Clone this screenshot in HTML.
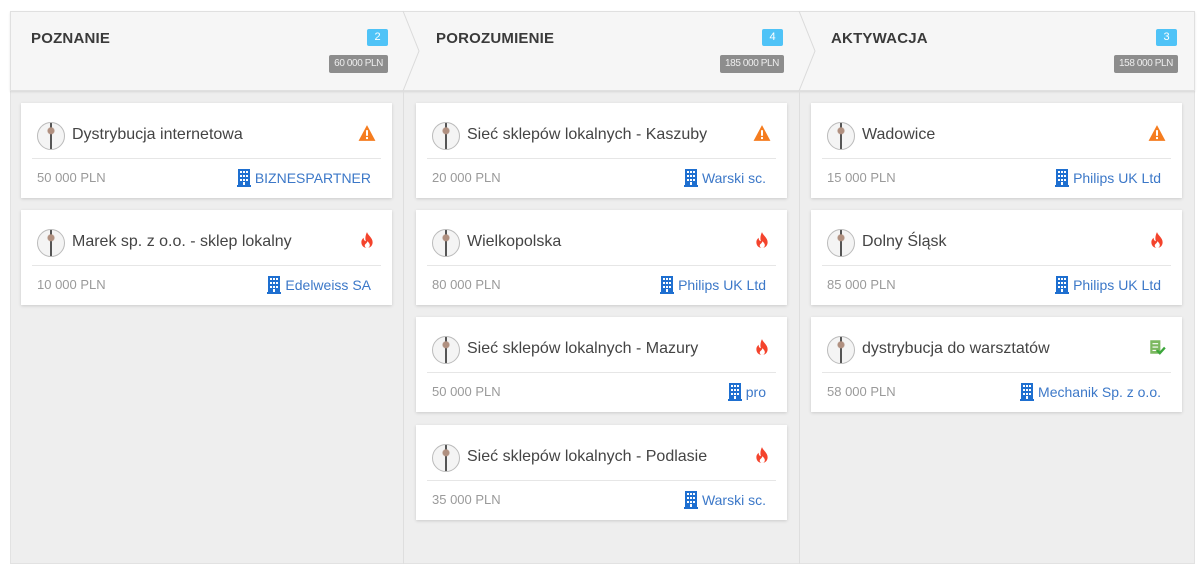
<!DOCTYPE html>
<html><head><meta charset="utf-8"><style>
*{box-sizing:border-box;margin:0;padding:0}
body{width:1200px;height:569px;background:#fff;font-family:"Liberation Sans",sans-serif;position:relative;overflow:hidden}
.wrap{position:absolute;left:10px;top:11px;width:1185px;height:553px;background:#eeeeee;border:1px solid #e2e2e2}
.head{position:absolute;left:10px;top:11px;width:1185px;height:80px;background:#f6f6f6;border:1px solid #e0e0e0;box-shadow:0 1px 2px rgba(0,0,0,.1)}
.vl{position:absolute;top:91px;width:1px;height:473px;background:#dedede}
.ht{position:absolute;top:30px;font-size:15px;font-weight:bold;color:#3a3a3a;letter-spacing:.2px}
.cnt{position:absolute;top:29px;height:17px;width:21px;background:#4fc3f7;color:#fff;font-size:11px;text-align:center;line-height:17px;border-radius:2px}
.sum{position:absolute;top:55px;height:18px;background:#8d8d8d;color:#eee;font-size:10px;line-height:18px;padding:0 5px;border-radius:2px;letter-spacing:-.4px}
.card{position:absolute;width:371px;height:95px;background:#fff;box-shadow:0 1px 3px rgba(0,0,0,.15)}
.av{position:absolute;left:16px;top:19px;width:28px;height:28px;border-radius:50%;border:1px solid #bbb;background:radial-gradient(circle at 50% 30%,#b09080 0 3px,transparent 4px),linear-gradient(90deg,#f4f4f4 0 46%,#555 46% 54%,#f4f4f4 54%)}
.tt{position:absolute;left:51px;top:23px;font-size:16px;color:#444}
.ic{position:absolute;right:16px;top:21px;width:18px;height:18px}
.sep{position:absolute;left:11px;right:11px;top:55px;height:1px;background:#e6e6e6}
.am{position:absolute;left:16px;top:67px;font-size:13px;color:#9a9a9a}
.co{position:absolute;right:21px;top:66px;font-size:14px;color:#3c78c8;display:flex;align-items:center}
.co svg{margin-right:4px}
</style></head><body>
<div class="wrap"></div>
<div class="head"></div>
<svg style="position:absolute;left:0;top:0" width="1200" height="92"><path d="M403 11 L419 51 L403 91 M799 11 L815 51 L799 91" stroke="#dadada" fill="none"/></svg>
<div class="vl" style="left:403px"></div><div class="vl" style="left:799px"></div>
<div class="ht" style="left:31px">POZNANIE</div>
<div class="ht" style="left:436px">POROZUMIENIE</div>
<div class="ht" style="left:831px">AKTYWACJA</div>
<div class="cnt" style="left:367px">2</div><div class="cnt" style="left:762px">4</div><div class="cnt" style="left:1156px">3</div>
<div class="sum" style="right:812px">60 000 PLN</div>
<div class="sum" style="right:416px">185 000 PLN</div>
<div class="sum" style="right:22px">158 000 PLN</div>

<svg width="0" height="0" style="position:absolute"><defs>
<symbol id="warn" viewBox="0 0 16 16"><path d="M8 1 L15.5 15 H0.5 Z" fill="#f57c1f"/><rect x="7.1" y="5.5" width="1.8" height="5" fill="#fff"/><rect x="7.1" y="11.6" width="1.8" height="1.8" fill="#fff"/></symbol>
<symbol id="fire" viewBox="0 0 16 16"><path d="M8 1 C9 4 13 6 13 10 C13 13 11 15 8 15 C5 15 3 13 3 10 C3 8 4 7 5 6 C5 8 6 9 7 9 C6 6 7 3 8 1 Z M8 15 C9.5 15 10.5 14 10.5 12.5 C10.5 11 9 10 8.5 9 C8 11 6 11.5 6 13 C6 14.2 7 15 8 15Z" fill="#f4432c" fill-rule="evenodd"/></symbol>
<symbol id="chk" viewBox="0 0 16 16"><rect x="2" y="2" width="9" height="12" fill="#7cb860"/><path d="M4 5h5M4 8h5M4 11h3" stroke="#fff"/><path d="M8 11 L10.5 13.5 L15 8.5" stroke="#3aa63a" stroke-width="2" fill="none"/></symbol>
<symbol id="bld" viewBox="0 0 14 18"><path d="M1 0h12v16h1v2H0v-2h1z" fill="#1e6fd0"/><g fill="#fff"><rect x="3" y="2" width="2" height="2"/><rect x="6" y="2" width="2" height="2"/><rect x="9" y="2" width="2" height="2"/><rect x="3" y="6" width="2" height="2"/><rect x="6" y="6" width="2" height="2"/><rect x="9" y="6" width="2" height="2"/><rect x="3" y="10" width="2" height="2"/><rect x="6" y="10" width="2" height="2"/><rect x="9" y="10" width="2" height="2"/><rect x="6" y="13" width="2" height="3"/></g></symbol>
</defs></svg>

<div class="card" style="left:21px;top:103px"><div class="av"></div><div class="tt">Dystrybucja internetowa</div><svg class="ic"><use href="#warn"/></svg><div class="sep"></div><div class="am">50 000 PLN</div><div class="co"><svg width="14" height="18"><use href="#bld"/></svg>BIZNESPARTNER</div></div>
<div class="card" style="left:21px;top:210px"><div class="av"></div><div class="tt">Marek sp. z o.o. - sklep lokalny</div><svg class="ic"><use href="#fire"/></svg><div class="sep"></div><div class="am">10 000 PLN</div><div class="co"><svg width="14" height="18"><use href="#bld"/></svg>Edelweiss SA</div></div>

<div class="card" style="left:416px;top:103px"><div class="av"></div><div class="tt">Sieć sklepów lokalnych - Kaszuby</div><svg class="ic"><use href="#warn"/></svg><div class="sep"></div><div class="am">20 000 PLN</div><div class="co"><svg width="14" height="18"><use href="#bld"/></svg>Warski sc.</div></div>
<div class="card" style="left:416px;top:210px"><div class="av"></div><div class="tt">Wielkopolska</div><svg class="ic"><use href="#fire"/></svg><div class="sep"></div><div class="am">80 000 PLN</div><div class="co"><svg width="14" height="18"><use href="#bld"/></svg>Philips UK Ltd</div></div>
<div class="card" style="left:416px;top:317px"><div class="av"></div><div class="tt">Sieć sklepów lokalnych - Mazury</div><svg class="ic"><use href="#fire"/></svg><div class="sep"></div><div class="am">50 000 PLN</div><div class="co"><svg width="14" height="18"><use href="#bld"/></svg>pro</div></div>
<div class="card" style="left:416px;top:425px"><div class="av"></div><div class="tt">Sieć sklepów lokalnych - Podlasie</div><svg class="ic"><use href="#fire"/></svg><div class="sep"></div><div class="am">35 000 PLN</div><div class="co"><svg width="14" height="18"><use href="#bld"/></svg>Warski sc.</div></div>

<div class="card" style="left:811px;top:103px"><div class="av"></div><div class="tt">Wadowice</div><svg class="ic"><use href="#warn"/></svg><div class="sep"></div><div class="am">15 000 PLN</div><div class="co"><svg width="14" height="18"><use href="#bld"/></svg>Philips UK Ltd</div></div>
<div class="card" style="left:811px;top:210px"><div class="av"></div><div class="tt">Dolny Śląsk</div><svg class="ic"><use href="#fire"/></svg><div class="sep"></div><div class="am">85 000 PLN</div><div class="co"><svg width="14" height="18"><use href="#bld"/></svg>Philips UK Ltd</div></div>
<div class="card" style="left:811px;top:317px"><div class="av"></div><div class="tt">dystrybucja do warsztatów</div><svg class="ic"><use href="#chk"/></svg><div class="sep"></div><div class="am">58 000 PLN</div><div class="co"><svg width="14" height="18"><use href="#bld"/></svg>Mechanik Sp. z o.o.</div></div>
</body></html>
